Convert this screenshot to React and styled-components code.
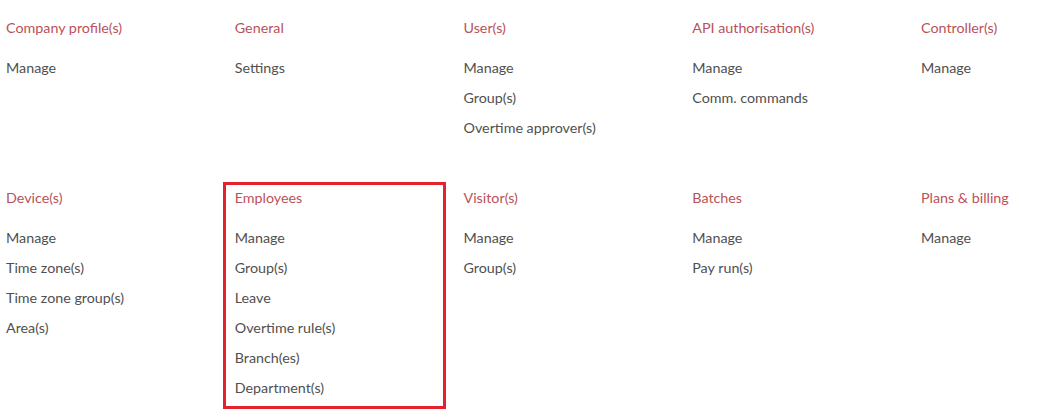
import React from 'react';
import styled, { createGlobalStyle } from 'styled-components';

const GlobalStyle = createGlobalStyle`
    html, body {
        margin: 0;
        padding: 0;
        background: #fff;
    }
    body {
        font-family: Lato, "Open Sans", sans-serif;
        width: 1042px;
        height: 417px;
        overflow: hidden;
    }
`;

const Page = styled.div`
    width: 1042px;
    height: 417px;
    overflow: hidden;
    box-sizing: border-box;
    padding: 18px 0 0 6px;
    display: grid;
    grid-template-columns: repeat(5, 228.75px);
    align-content: start;
    row-gap: 45px;
    align-items: start;
`;

const Section = styled.div`
    position: relative;
    display: flex;
    flex-direction: column;

    ${(p) => p.$highlighted && `
        &::after {
            content: '';
            position: absolute;
            top: -6px;
            left: -12px;
            width: 223px;
            height: 227px;
            box-sizing: border-box;
            border: 3px solid #e4222b;
            pointer-events: none;
        }
    `}
`;

const Heading = styled.div`
    font-size: 14.3px;
    line-height: 20px;
    color: #b9525a;
    margin-bottom: 15px;
    white-space: nowrap;
`;

const Item = styled.a`
    font-size: 14.3px;
    line-height: 30px;
    color: #505050;
    text-decoration: none;
    white-space: nowrap;
    cursor: pointer;
`;

const sections = [
    { title: 'Company profile(s)', items: ['Manage'] },
    { title: 'General', items: ['Settings'] },
    { title: 'User(s)', items: ['Manage', 'Group(s)', 'Overtime approver(s)'] },
    { title: 'API authorisation(s)', items: ['Manage', 'Comm. commands'] },
    { title: 'Controller(s)', items: ['Manage'] },
    { title: 'Device(s)', items: ['Manage', 'Time zone(s)', 'Time zone group(s)', 'Area(s)'] },
    {
        title: 'Employees',
        items: ['Manage', 'Group(s)', 'Leave', 'Overtime rule(s)', 'Branch(es)', 'Department(s)'],
        highlighted: true,
    },
    { title: 'Visitor(s)', items: ['Manage', 'Group(s)'] },
    { title: 'Batches', items: ['Manage', 'Pay run(s)'] },
    { title: 'Plans & billing', items: ['Manage'] },
];

const App = () => (
    <>
        <GlobalStyle />
        <Page>
            {sections.map((s) => (
                <Section key={s.title} $highlighted={s.highlighted}>
                    <Heading>{s.title}</Heading>
                    {s.items.map((item) => (
                        <Item key={item}>{item}</Item>
                    ))}
                </Section>
            ))}
        </Page>
    </>
);

export default App;
